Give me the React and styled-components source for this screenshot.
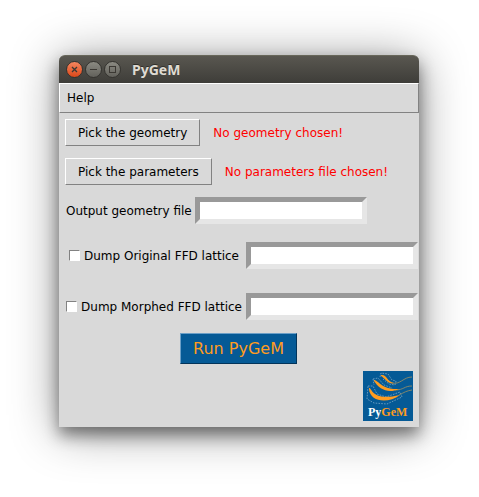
import React from "react";
import styled, { createGlobalStyle } from "styled-components";

const GlobalStyle = createGlobalStyle`
  *, *::before, *::after { box-sizing: border-box; }
  body {
    margin: 0;
    background: #fff;
    color: #000;
    font: 12px/16px "DejaVu Sans", sans-serif;
  }
  button, input { font: inherit; color: inherit; }
`;

const Desktop = styled.div`
  padding: 55px 60px 70px 59px;
  overflow: hidden;
`;

const AppWindow = styled.main`
  background: #d9d9d9;
  border-radius: 6px 6px 0 0;
  box-shadow: 0 8px 16px rgba(0, 0, 0, 0.45), 0 4px 48px rgba(0, 0, 0, 0.42);
`;

const TitleBar = styled.header`
  display: flex;
  align-items: center;
  gap: 2px;
  height: 28px;
  padding: 0 7px;
  border-radius: 6px 6px 0 0;
  border-top: 1px solid #68675a;
  background: linear-gradient(#595750, #3e3d39);
`;

const Title = styled.h1`
  margin: 0 0 0 9px;
  color: #dfdbd2;
  font: bold 14px/20px "Noto Sans", "Open Sans", sans-serif;
  text-shadow: 0 -1px #302f2b;
`;

const WindowControl = styled.button`
  display: flex;
  width: 17px;
  height: 17px;
  padding: 0;
  border: 1px solid #34332f;
  border-radius: 50%;
  background: ${({ $close }) =>
    $close ? "linear-gradient(#f5865f, #dc4819)" : "linear-gradient(#8b8a82, #62615b)"};

  svg {
    width: 15px;
    height: 15px;
    fill: none;
    stroke: #3b3833;
  }
`;

const MenuBar = styled.nav`
  height: 30px;
  padding: 5px 6px;
  border: 1px solid;
  border-color: #fff #828282 #828282 #fff;
`;

const MenuItem = styled.button`
  display: block;
  padding: 1px;
  border: 0;
  background: none;
`;

const Form = styled.form`
  display: flex;
  flex-direction: column;
  padding: 6px 1px 6px 6px;
`;

const FileRow = styled.div`
  display: flex;
  align-items: center;
  gap: 13px;
  margin-bottom: 12px;
`;

const PickButton = styled.button`
  height: 27px;
  padding: 0 12px;
  border: 1px solid;
  border-color: #fff #828282 #828282 #fff;
  background: #d9d9d9;
  white-space: nowrap;
`;

const Status = styled.output`
  color: #f00;
  white-space: nowrap;
`;

const OutputRow = styled.div`
  display: flex;
  align-items: center;
  gap: 3px;
  padding-left: 1px;
  margin-bottom: 18px;
`;

const DumpRow = styled.div`
  display: flex;
  align-items: center;
  justify-content: space-between;
  margin-bottom: ${({ $last }) => ($last ? "13px" : "24px")};
`;

const CheckLabel = styled.label`
  display: flex;
  flex: 1;
  align-items: center;
  justify-content: center;
  gap: 4px;
  padding-right: 3px;
  white-space: nowrap;
`;

const CheckBox = styled.input`
  appearance: none;
  width: 11px;
  height: 11px;
  margin: 0;
  border: 1px solid;
  border-color: #828282 #fff #fff #828282;
  background: #fff;

  &:checked {
    background: #055a96;
  }
`;

const Entry = styled.input`
  flex: 0 0 172px;
  width: 172px;
  height: 27px;
  padding: 0 2px;
  border: 5px solid;
  border-color: #999 #e6e6e6 #e6e6e6 #999;
  border-radius: 0;
  background: #fff;
`;

const RunButton = styled.button`
  align-self: center;
  height: 31px;
  margin: 0 6px 7px 0;
  padding: 0 12px;
  border: 1px solid;
  border-color: #6b9fc7 #02345a #02345a #6b9fc7;
  background: #055a96;
  color: #ff9c20;
  font-size: 16px;
  line-height: 20px;
`;

const Logo = styled.svg`
  display: block;
  align-self: flex-end;
  width: 50px;
  height: 50px;
  margin-right: 5px;
`;

const LogoText = styled.text`
  font: bold 12px "Liberation Serif", serif;
`;

function PyGeMLogo() {
  return (
    <Logo viewBox="0 0 50 50" role="img" aria-label="PyGeM">
      <rect width="50" height="50" fill="#055a96" />
      <g fill="none" stroke="#8db3d0" strokeWidth="0.7" strokeDasharray="1.6 1.2">
        <path d="M17 6 L18 2 L25 3 L29 9 L33 10 L32 14 L26 13 L20 8" />
        <path d="M10 8 L15 7 L21 14 L29 17 M10 8 L11 14" />
        <path d="M5 15 L10 15 L14 23 L23 26 L37 21 L39 26 L24 33 L11 32 L4 28 Z" />
      </g>
      <g fill="none" stroke="#8f8a68" strokeWidth="0.9">
        <path d="M28 12 C38 14 40 6 49 6" />
        <path d="M32 19 C41 19 41 15 49 15" />
        <path d="M36 24 C42 21 43 20 49 19" />
      </g>
      <g fill="#ff9c20">
        <path d="M18 4 C24 3 23 10 31 12 C25 14 22 7 18 5 Z" />
        <path d="M11 9 C15 9 19 19 36 18 C25 23 16 18 11 10 Z" />
        <path d="M6 17 C9 16 8 31 37 24 C25 33 7 31 6 18 Z" />
      </g>
      <LogoText x="5" y="45" fill="#fff">
        Py<tspan fill="#ff9c20">GeM</tspan>
      </LogoText>
    </Logo>
  );
}

export default function App() {
  return (
    <>
      <GlobalStyle />
      <Desktop>
        <AppWindow>
          <TitleBar>
            <WindowControl type="button" aria-label="Close" $close>
              <svg viewBox="0 0 15 15"><path d="M5 5 L10 10 M10 5 L5 10" strokeWidth="1.3" /></svg>
            </WindowControl>
            <WindowControl type="button" aria-label="Minimize">
              <svg viewBox="0 0 15 15"><path d="M4 7.5 H11" /></svg>
            </WindowControl>
            <WindowControl type="button" aria-label="Maximize">
              <svg viewBox="0 0 15 15"><rect x="4.5" y="4.5" width="6" height="6" /></svg>
            </WindowControl>
            <Title>PyGeM</Title>
          </TitleBar>
          <MenuBar>
            <MenuItem type="button">Help</MenuItem>
          </MenuBar>
          <Form onSubmit={(event) => event.preventDefault()}>
            <FileRow>
              <PickButton type="button">Pick the geometry</PickButton>
              <Status>No geometry chosen!</Status>
            </FileRow>
            <FileRow>
              <PickButton type="button">Pick the parameters</PickButton>
              <Status>No parameters file chosen!</Status>
            </FileRow>
            <OutputRow>
              <label htmlFor="output-file">Output geometry file</label>
              <Entry id="output-file" type="text" />
            </OutputRow>
            <DumpRow>
              <CheckLabel>
                <CheckBox type="checkbox" />
                Dump Original FFD lattice
              </CheckLabel>
              <Entry type="text" aria-label="Original FFD lattice file" />
            </DumpRow>
            <DumpRow $last>
              <CheckLabel>
                <CheckBox type="checkbox" />
                Dump Morphed FFD lattice
              </CheckLabel>
              <Entry type="text" aria-label="Morphed FFD lattice file" />
            </DumpRow>
            <RunButton type="submit">Run PyGeM</RunButton>
            <PyGeMLogo />
          </Form>
        </AppWindow>
      </Desktop>
    </>
  );
}
